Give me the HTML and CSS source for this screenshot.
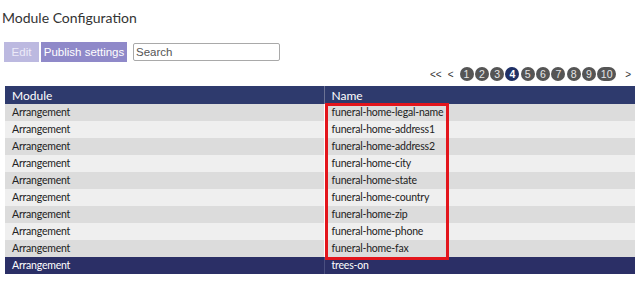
FILE: index.html
```html
<!DOCTYPE html>
<html lang="en">
<head>
  <meta charset="UTF-8" />
  <title>Module Configuration</title>
  <link rel="stylesheet" href="styles.css">
</head>
<body>
  <h1 class="page-title">Module Configuration</h1>

  <div class="toolbar">
    <button class="btn btn-edit">Edit</button>
    <button class="btn btn-publish">Publish settings</button>
    <input type="text" class="search" placeholder="Search" />
  </div>

  <div class="pager">
    <span class="pager-link">&lt;&lt;</span>
    <span class="pager-link">&lt;</span>
    <span class="page">1</span>
    <span class="page">2</span>
    <span class="page">3</span>
    <span class="page current">4</span>
    <span class="page">5</span>
    <span class="page">6</span>
    <span class="page">7</span>
    <span class="page">8</span>
    <span class="page">9</span>
    <span class="page wide">10</span>
    <span class="pager-link">&gt;</span>
    <span class="pager-link">&gt;&gt;</span>
  </div>

  <div class="table-wrap">
    <table class="grid">
      <thead>
        <tr><th class="col-module">Module</th><th>Name</th></tr>
      </thead>
      <tbody>
        <tr><td>Arrangement</td><td>funeral-home-legal-name</td></tr>
        <tr><td>Arrangement</td><td>funeral-home-address1</td></tr>
        <tr><td>Arrangement</td><td>funeral-home-address2</td></tr>
        <tr><td>Arrangement</td><td>funeral-home-city</td></tr>
        <tr><td>Arrangement</td><td>funeral-home-state</td></tr>
        <tr><td>Arrangement</td><td>funeral-home-country</td></tr>
        <tr><td>Arrangement</td><td>funeral-home-zip</td></tr>
        <tr><td>Arrangement</td><td>funeral-home-phone</td></tr>
        <tr><td>Arrangement</td><td>funeral-home-fax</td></tr>
        <tr class="selected"><td>Arrangement</td><td>trees-on</td></tr>
      </tbody>
    </table>
    <!-- highlight box drawn over the name cells -->
    <div class="highlight"></div>
  </div>
</body>
</html>
```

FILE: styles.css
```css
* {
  box-sizing: border-box;
}

body {
  margin: 0;
  padding: 0 0 0 5px;
  font-family: Lato, "Liberation Sans", sans-serif;
  color: #222;
  background: #fff;
  overflow: hidden;
}

.page-title {
  margin: 8px 0 0 -3px;
  font-size: 14px;
  font-weight: normal;
  color: #333;
  line-height: 19px;
}

.toolbar {
  display: flex;
  align-items: center;
  margin-top: 15px;
  margin-left: -1px;
  height: 20px;
}

.btn {
  height: 20px;
  border: none;
  padding: 0;
  margin-right: 2px;
  font-family: "Liberation Sans", Arial, sans-serif;
  font-size: 11.5px;
  color: #fff;
  cursor: pointer;
}

.btn-edit {
  width: 35px;
  background: #bcb9e0;
  color: #eceaf8;
}

.btn-publish {
  width: 86px;
  background: #8f89c9;
}

.search {
  margin-left: 4px;
  width: 147px;
  height: 18px;
  border: 1px solid #a9a9a9;
  border-radius: 2px;
  padding: 0 2px;
  font-family: "Liberation Sans", Arial, sans-serif;
  font-size: 11.5px;
  color: #333;
}

.search::placeholder {
  color: #555;
}

.pager {
  display: flex;
  align-items: center;
  margin-top: 4px;
  margin-left: 425px;
  width: 220px;
  height: 16px;
  font-family: "Liberation Sans", Arial, sans-serif;
  white-space: nowrap;
}

.pager > span {
  flex: 0 0 auto;
}

.pager-link {
  font-size: 10px;
  color: #333;
  margin-right: 6px;
}

.page {
  display: inline-flex;
  align-items: center;
  justify-content: center;
  width: 14px;
  min-width: 14px;
  height: 14px;
  margin-right: 1.3px;
  border-radius: 7px;
  background: #555;
  color: #e6e6e6;
  font-size: 10.5px;
}

.page.current {
  background: #1f3066;
  color: #fff;
  font-weight: bold;
}

.page.wide {
  width: 19px;
  min-width: 19px;
  margin-right: 9px;
}

.table-wrap {
  position: relative;
  margin-top: 4px;
  width: 660px;
}

.grid {
  width: 660px;
  border-collapse: collapse;
  font-size: 10.5px;
  letter-spacing: -0.2px;
}

.grid th {
  background: #2e3a6d;
  color: #fff;
  font-weight: normal;
  font-size: 12px;
  letter-spacing: 0;
  text-align: left;
  height: 18px;
  padding: 0 0 0 7px;
}

.grid th.col-module {
  width: 319px;
  border-right: 1px solid #6c7395;
}

.grid td {
  height: 17px;
  padding: 0 0 0 7px;
  line-height: 17px;
}

.grid td:first-child {
  border-right: 1px solid #fff;
}

.grid tbody tr:nth-child(odd) td {
  background: #dcdcdc;
}

.grid tbody tr:nth-child(even) td {
  background: #efefef;
}

.grid tbody tr.selected td {
  background: #2b2f66;
  color: #fff;
}

.grid tbody tr.selected td:first-child {
  border-right: 1px solid #4a4f80;
}

.highlight {
  position: absolute;
  left: 320px;
  top: 17px;
  width: 124px;
  height: 157px;
  border: 3px solid #e3151c;
  pointer-events: none;
}
```
